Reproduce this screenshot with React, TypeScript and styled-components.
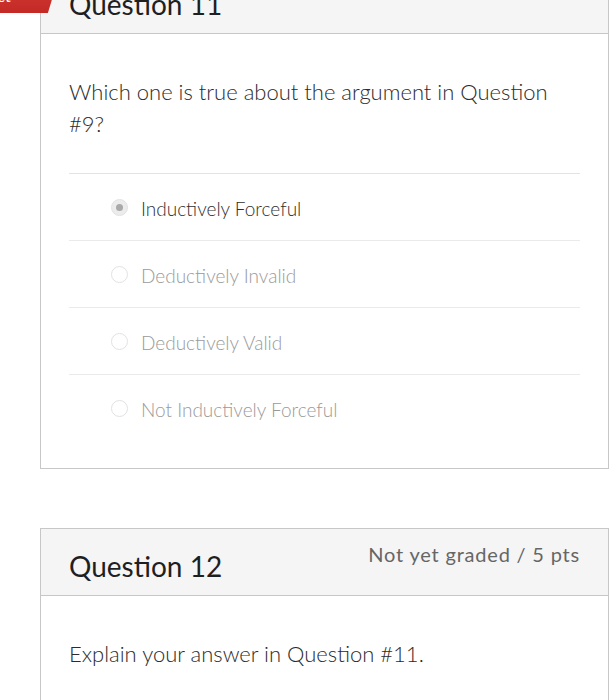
import styled, { createGlobalStyle } from 'styled-components'

const GlobalStyle = createGlobalStyle`
	html, body {
		margin: 0;
		padding: 0;
		background: #ffffff;
		font-family: Lato, "Noto Sans", sans-serif;
		overflow: hidden;
	}
`

const Page = styled.div`
	padding: 0 1px 0 40px;
`

const Card = styled.div<{ $first?: boolean }>`
	position: relative;
	border: 1px solid #c7c7c7;
	margin-top: ${(p) => (p.$first ? '-34px' : '59px')};
`

const Ribbon = styled.div`
	position: absolute;
	left: -41px;
	top: 16px;
	height: 30px;
	width: 57px;
	background: linear-gradient(#d43a34, #c42a25);
	clip-path: polygon(0 0, 100% 0, 84% 100%, 0 100%);
	color: #fff;
	font-size: 16px;
	line-height: 26px;
	text-indent: -42px;
	white-space: nowrap;
	overflow: hidden;
`

const Header = styled.div`
	display: flex;
	justify-content: space-between;
	align-items: flex-start;
	height: 67px;
	box-sizing: border-box;
	padding: 0 28px;
	background: #f5f5f5;
	border-bottom: 1px solid #c7c7c7;
`

const Title = styled.div`
	font-size: 28px;
	color: #1f1f1f;
	padding-top: 22px;
	line-height: 30px;
`

const Points = styled.div`
	font-size: 20px;
	color: #666666;
	padding-top: 13px;
	line-height: 24px;
	letter-spacing: 0.8px;
`

const Body = styled.div`
	padding: 42px 28px 27px 28px;
`

const QuestionText = styled.div`
	font-size: 22px;
	font-weight: 300;
	line-height: 32px;
	color: #2b2b2b;
`

const Answers = styled.div`
	margin-top: 33px;
	border-top: 1px solid #e4e4e4;
`

const AnswerRow = styled.div<{ $selected?: boolean }>`
	display: flex;
	align-items: center;
	gap: 13px;
	height: 66px;
	box-sizing: content-box;
	padding: 1px 0 0 42px;
	margin-bottom: -1px;
	font-size: 19px;
	font-weight: 300;
	color: ${(p) => (p.$selected ? '#2f2f2f' : '#9a9a9a')};
	& + & {
		border-top: 1px solid #eaeaea;
	}
`

const Radio = styled.span<{ $selected?: boolean }>`
	display: inline-flex;
	align-items: center;
	justify-content: center;
	width: 17px;
	height: 17px;
	margin-top: -1px;
	box-sizing: border-box;
	border-radius: 50%;
	border: 1px solid #e2e2e2;
	background: ${(p) => (p.$selected ? '#ececec' : '#fff')};
	&::after {
		content: '';
		display: ${(p) => (p.$selected ? 'block' : 'none')};
		width: 7px;
		height: 7px;
		border-radius: 50%;
		background: #a9a9a9;
	}
`

const Spacer = styled.div`
	height: 20px;
`

const answers = [
	{ label: 'Inductively Forceful', selected: true },
	{ label: 'Deductively Invalid' },
	{ label: 'Deductively Valid' },
	{ label: 'Not Inductively Forceful' },
]

export default function App() {
	return (
		<>
			<GlobalStyle />
			<Page>
				<Card $first>
					<Ribbon>Correct</Ribbon>
					<Header>
						<Title>Question 11</Title>
						<Points style={{ marginTop: '-25px' }}>1 / 1 pts</Points>
					</Header>
					<Body>
						<QuestionText>Which one is true about the argument in Question #9?</QuestionText>
						<Answers>
							{answers.map((a) => (
								<AnswerRow key={a.label} $selected={a.selected}>
									<Radio $selected={a.selected} />
									{a.label}
								</AnswerRow>
							))}
						</Answers>
					</Body>
				</Card>
				<Card>
					<Header>
						<Title>Question 12</Title>
						<Points>Not yet graded / 5 pts</Points>
					</Header>
					<Body>
						<QuestionText>Explain your answer in Question #11.</QuestionText>
						<Spacer />
					</Body>
				</Card>
			</Page>
		</>
	)
}
